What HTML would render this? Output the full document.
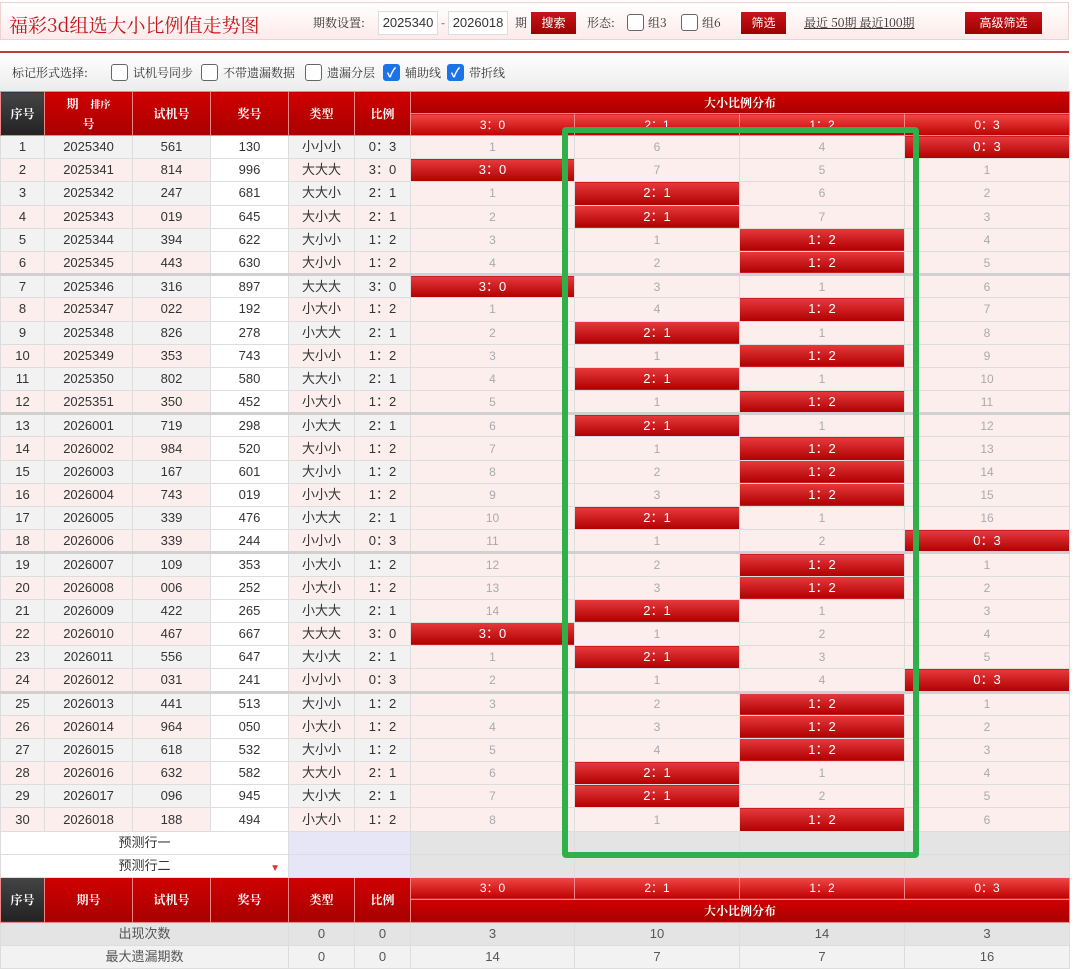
<!DOCTYPE html>
<html><head><meta charset="utf-8">
<style>
*{margin:0;padding:0;box-sizing:border-box}
body{width:1080px;height:962px;overflow:hidden;background:#fff;font-family:"Liberation Sans","Noto Sans CJK SC",sans-serif;font-size:13px;color:#333;position:relative}
.top{position:absolute;left:0;top:2px;width:1069px;height:38px;border:1px solid #f0d0d0;background:linear-gradient(#fff,#fdeaea);}
.title{position:absolute;left:8px;top:8px;font-size:19px;color:#c4161c;font-family:"Noto Serif CJK SC",serif}
.t{position:absolute;top:11px;font-size:12px;color:#333;font-family:"Noto Serif CJK SC",serif}
.inp{position:absolute;top:8px;height:24px;width:60px;background:#fff;border:1px solid #ddd;font-size:13px;line-height:22px;text-align:center}
.btn{position:absolute;top:9px;height:22px;background:linear-gradient(#c8141a,#9e0000);color:#fff;font-size:12px;line-height:22px;text-align:center}
.cb{position:absolute;width:17px;height:17px;border:1px solid #666;border-radius:3px;background:#fff}
.cbc{background:#1a73e8;border-color:#1a73e8;color:#fff;font-size:13px;line-height:15px;text-align:center;font-weight:bold}
.rl{position:absolute;left:0;top:51px;width:1069px;height:2px;background:#b84040}
.opt{position:absolute;left:0;top:53px;width:1069px;height:38px;background:linear-gradient(#fff,#ececec)}
table{position:absolute;left:0;top:91px;border-collapse:collapse;table-layout:fixed;width:1069px}
td{border:1px solid #ddd;height:23.2px;text-align:center;font-size:13px;color:#333;padding:0;white-space:nowrap;overflow:hidden;line-height:20px}
.h td{background:linear-gradient(#d00000,#a80000);color:#fff;font-family:"Noto Serif CJK SC",serif;font-size:12px;border-color:#e88;font-weight:bold}
.h td.dk{background:linear-gradient(#444,#222)}
.h td.s{background:linear-gradient(#f04848,#c00000);font-family:"Liberation Sans",sans-serif;font-weight:normal;height:22px}
tr.d td{background:#fdeeee}
tr.d td.w{background:#fff}
tr.o td.g{background:#f2f2f2}
tr.d td.m{color:#aaa;font-size:12px}
tr.d td.r{background:linear-gradient(#e63a3e,#b00000);color:#fff;font-size:13px}
tr.sep td{border-top:3px solid #d0d0d0}
.pr td{background:#fff;height:23px}
.pr td.lv{background:#e6e6f6}
.pr td.gy{background:#e4e4e4}
.st td{background:#e4e4e4;color:#555}
.st2 td{background:#f2f2f2;color:#555}
.green{position:absolute;left:562px;top:127px;width:357px;height:731px;border:6px solid #30b04a;border-radius:4px}
</style></head><body>
<div class="top">
<div class="title">福彩3d组选大小比例值走势图</div>
<div class="t" style="left:312px">期数设置:</div>
<div class="inp" style="left:377px">2025340</div>
<div class="t" style="left:440px">-</div>
<div class="inp" style="left:447px">2026018</div>
<div class="t" style="left:514px">期</div>
<div class="btn" style="left:530px;width:45px">搜索</div>
<div class="t" style="left:586px">形态:</div>
<div class="cb" style="left:626px;top:11px"></div>
<div class="t" style="left:647px">组3</div>
<div class="cb" style="left:680px;top:11px"></div>
<div class="t" style="left:701px">组6</div>
<div class="btn" style="left:740px;width:45px">筛选</div>
<div class="t" style="left:803px;text-decoration:underline">最近 50期 最近100期</div>
<div class="btn" style="left:964px;width:77px">高级筛选</div>
</div>
<div class="rl"></div>
<div class="opt">
<div class="t" style="left:12px;top:11px">标记形式选择:</div>
<div class="cb" style="left:111px;top:11px"></div><div class="t" style="left:133px;top:11px">试机号同步</div>
<div class="cb" style="left:201px;top:11px"></div><div class="t" style="left:223px;top:11px">不带遗漏数据</div>
<div class="cb" style="left:305px;top:11px"></div><div class="t" style="left:327px;top:11px">遗漏分层</div>
<div class="cb cbc" style="left:383px;top:11px">✓</div><div class="t" style="left:405px;top:11px">辅助线</div>
<div class="cb cbc" style="left:447px;top:11px">✓</div><div class="t" style="left:469px;top:11px">带折线</div>
</div>
<table>
<colgroup><col style="width:44px"><col style="width:88px"><col style="width:78px"><col style="width:78px"><col style="width:66px"><col style="width:56px"><col style="width:164px"><col style="width:165px"><col style="width:165px"><col style="width:165px"></colgroup>
<tr class="h"><td rowspan="2" class="dk">序号</td><td rowspan="2">期　<span style="font-size:10px">排序</span><br>号</td><td rowspan="2">试机号</td><td rowspan="2">奖号</td><td rowspan="2">类型</td><td rowspan="2">比例</td><td colspan="4" style="height:22px">大小比例分布</td></tr>
<tr class="h"><td class="s">3：0</td><td class="s">2：1</td><td class="s">1：2</td><td class="s">0：3</td></tr>
<tr class="d o"><td class="g">1</td><td class="g">2025340</td><td class="g">561</td><td class="w">130</td><td class="g">小小小</td><td class="g">0：3</td><td class="m">1</td><td class="m">6</td><td class="m">4</td><td class="r">0：3</td></tr>
<tr class="d"><td>2</td><td>2025341</td><td>814</td><td class="w">996</td><td>大大大</td><td>3：0</td><td class="r">3：0</td><td class="m">7</td><td class="m">5</td><td class="m">1</td></tr>
<tr class="d o"><td class="g">3</td><td class="g">2025342</td><td class="g">247</td><td class="w">681</td><td class="g">大大小</td><td class="g">2：1</td><td class="m">1</td><td class="r">2：1</td><td class="m">6</td><td class="m">2</td></tr>
<tr class="d"><td>4</td><td>2025343</td><td>019</td><td class="w">645</td><td>大小大</td><td>2：1</td><td class="m">2</td><td class="r">2：1</td><td class="m">7</td><td class="m">3</td></tr>
<tr class="d o"><td class="g">5</td><td class="g">2025344</td><td class="g">394</td><td class="w">622</td><td class="g">大小小</td><td class="g">1：2</td><td class="m">3</td><td class="m">1</td><td class="r">1：2</td><td class="m">4</td></tr>
<tr class="d"><td>6</td><td>2025345</td><td>443</td><td class="w">630</td><td>大小小</td><td>1：2</td><td class="m">4</td><td class="m">2</td><td class="r">1：2</td><td class="m">5</td></tr>
<tr class="d o sep"><td class="g">7</td><td class="g">2025346</td><td class="g">316</td><td class="w">897</td><td class="g">大大大</td><td class="g">3：0</td><td class="r">3：0</td><td class="m">3</td><td class="m">1</td><td class="m">6</td></tr>
<tr class="d"><td>8</td><td>2025347</td><td>022</td><td class="w">192</td><td>小大小</td><td>1：2</td><td class="m">1</td><td class="m">4</td><td class="r">1：2</td><td class="m">7</td></tr>
<tr class="d o"><td class="g">9</td><td class="g">2025348</td><td class="g">826</td><td class="w">278</td><td class="g">小大大</td><td class="g">2：1</td><td class="m">2</td><td class="r">2：1</td><td class="m">1</td><td class="m">8</td></tr>
<tr class="d"><td>10</td><td>2025349</td><td>353</td><td class="w">743</td><td>大小小</td><td>1：2</td><td class="m">3</td><td class="m">1</td><td class="r">1：2</td><td class="m">9</td></tr>
<tr class="d o"><td class="g">11</td><td class="g">2025350</td><td class="g">802</td><td class="w">580</td><td class="g">大大小</td><td class="g">2：1</td><td class="m">4</td><td class="r">2：1</td><td class="m">1</td><td class="m">10</td></tr>
<tr class="d"><td>12</td><td>2025351</td><td>350</td><td class="w">452</td><td>小大小</td><td>1：2</td><td class="m">5</td><td class="m">1</td><td class="r">1：2</td><td class="m">11</td></tr>
<tr class="d o sep"><td class="g">13</td><td class="g">2026001</td><td class="g">719</td><td class="w">298</td><td class="g">小大大</td><td class="g">2：1</td><td class="m">6</td><td class="r">2：1</td><td class="m">1</td><td class="m">12</td></tr>
<tr class="d"><td>14</td><td>2026002</td><td>984</td><td class="w">520</td><td>大小小</td><td>1：2</td><td class="m">7</td><td class="m">1</td><td class="r">1：2</td><td class="m">13</td></tr>
<tr class="d o"><td class="g">15</td><td class="g">2026003</td><td class="g">167</td><td class="w">601</td><td class="g">大小小</td><td class="g">1：2</td><td class="m">8</td><td class="m">2</td><td class="r">1：2</td><td class="m">14</td></tr>
<tr class="d"><td>16</td><td>2026004</td><td>743</td><td class="w">019</td><td>小小大</td><td>1：2</td><td class="m">9</td><td class="m">3</td><td class="r">1：2</td><td class="m">15</td></tr>
<tr class="d o"><td class="g">17</td><td class="g">2026005</td><td class="g">339</td><td class="w">476</td><td class="g">小大大</td><td class="g">2：1</td><td class="m">10</td><td class="r">2：1</td><td class="m">1</td><td class="m">16</td></tr>
<tr class="d"><td>18</td><td>2026006</td><td>339</td><td class="w">244</td><td>小小小</td><td>0：3</td><td class="m">11</td><td class="m">1</td><td class="m">2</td><td class="r">0：3</td></tr>
<tr class="d o sep"><td class="g">19</td><td class="g">2026007</td><td class="g">109</td><td class="w">353</td><td class="g">小大小</td><td class="g">1：2</td><td class="m">12</td><td class="m">2</td><td class="r">1：2</td><td class="m">1</td></tr>
<tr class="d"><td>20</td><td>2026008</td><td>006</td><td class="w">252</td><td>小大小</td><td>1：2</td><td class="m">13</td><td class="m">3</td><td class="r">1：2</td><td class="m">2</td></tr>
<tr class="d o"><td class="g">21</td><td class="g">2026009</td><td class="g">422</td><td class="w">265</td><td class="g">小大大</td><td class="g">2：1</td><td class="m">14</td><td class="r">2：1</td><td class="m">1</td><td class="m">3</td></tr>
<tr class="d"><td>22</td><td>2026010</td><td>467</td><td class="w">667</td><td>大大大</td><td>3：0</td><td class="r">3：0</td><td class="m">1</td><td class="m">2</td><td class="m">4</td></tr>
<tr class="d o"><td class="g">23</td><td class="g">2026011</td><td class="g">556</td><td class="w">647</td><td class="g">大小大</td><td class="g">2：1</td><td class="m">1</td><td class="r">2：1</td><td class="m">3</td><td class="m">5</td></tr>
<tr class="d"><td>24</td><td>2026012</td><td>031</td><td class="w">241</td><td>小小小</td><td>0：3</td><td class="m">2</td><td class="m">1</td><td class="m">4</td><td class="r">0：3</td></tr>
<tr class="d o sep"><td class="g">25</td><td class="g">2026013</td><td class="g">441</td><td class="w">513</td><td class="g">大小小</td><td class="g">1：2</td><td class="m">3</td><td class="m">2</td><td class="r">1：2</td><td class="m">1</td></tr>
<tr class="d"><td>26</td><td>2026014</td><td>964</td><td class="w">050</td><td>小大小</td><td>1：2</td><td class="m">4</td><td class="m">3</td><td class="r">1：2</td><td class="m">2</td></tr>
<tr class="d o"><td class="g">27</td><td class="g">2026015</td><td class="g">618</td><td class="w">532</td><td class="g">大小小</td><td class="g">1：2</td><td class="m">5</td><td class="m">4</td><td class="r">1：2</td><td class="m">3</td></tr>
<tr class="d"><td>28</td><td>2026016</td><td>632</td><td class="w">582</td><td>大大小</td><td>2：1</td><td class="m">6</td><td class="r">2：1</td><td class="m">1</td><td class="m">4</td></tr>
<tr class="d o"><td class="g">29</td><td class="g">2026017</td><td class="g">096</td><td class="w">945</td><td class="g">大小大</td><td class="g">2：1</td><td class="m">7</td><td class="r">2：1</td><td class="m">2</td><td class="m">5</td></tr>
<tr class="d"><td>30</td><td>2026018</td><td>188</td><td class="w">494</td><td>小大小</td><td>1：2</td><td class="m">8</td><td class="m">1</td><td class="r">1：2</td><td class="m">6</td></tr>
<tr class="pr"><td colspan="4">预测行一</td><td colspan="2" class="lv"></td><td class="gy"></td><td class="gy"></td><td class="gy"></td><td class="gy"></td></tr>
<tr class="pr"><td colspan="4" style="position:relative">预测行二<span style="position:absolute;right:8px;top:4px;color:#d33;font-size:10px">▼</span></td><td colspan="2" class="lv"></td><td class="gy"></td><td class="gy"></td><td class="gy"></td><td class="gy"></td></tr>
<tr class="h"><td rowspan="2" class="dk">序号</td><td rowspan="2">期号</td><td rowspan="2">试机号</td><td rowspan="2">奖号</td><td rowspan="2">类型</td><td rowspan="2">比例</td><td class="s">3：0</td><td class="s">2：1</td><td class="s">1：2</td><td class="s">0：3</td></tr>
<tr class="h"><td colspan="4" style="height:23px">大小比例分布</td></tr>
<tr class="st"><td colspan="4">出现次数</td><td>0</td><td>0</td><td>3</td><td>10</td><td>14</td><td>3</td></tr>
<tr class="st2"><td colspan="4">最大遗漏期数</td><td>0</td><td>0</td><td>14</td><td>7</td><td>7</td><td>16</td></tr>
</table>
<div class="green"></div>
</body></html>
